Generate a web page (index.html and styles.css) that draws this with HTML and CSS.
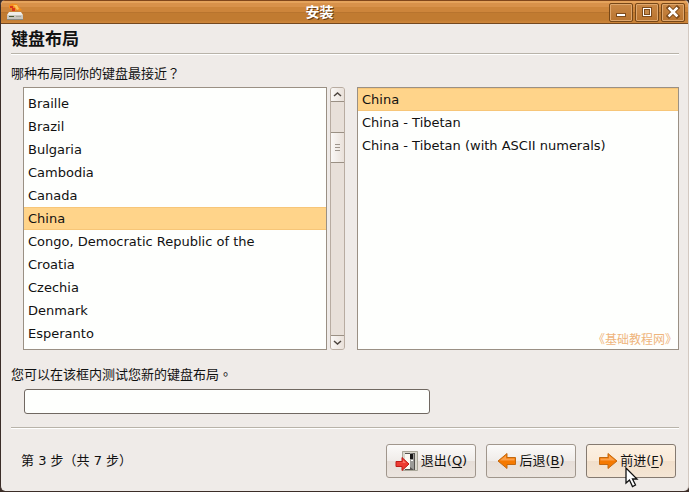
FILE: index.html
```html
<!DOCTYPE html>
<html lang="zh-CN">
<head>
<meta charset="utf-8">
<title>安装</title>
<link rel="stylesheet" href="styles.css">
</head>
<body>
<div class="window">
  <header class="titlebar">
    <svg class="app-icon" width="18" height="18" viewBox="0 0 18 18" aria-hidden="true">
      <path d="M3 2l3-1.500 5 .5 2 3 3 3-3 1-2-2-2 2-3-1-3-2z" fill="#f28c1c"/>
      <path d="M4 3h3v2H4zM6 5h3v3H6z" fill="#d8361a"/>
      <path d="M7 2h4l2 4-2 1-2-3z" fill="#fbc35f"/>
      <path d="M3 9h12l2 3H1z" fill="#efeeea"/>
      <path d="M1 12h16v4H1z" fill="#c9c7c0"/>
      <path d="M1 16h16v1H1z" fill="#8b8a82"/>
      <path d="M3 13h5v1H3z" fill="#4b5a32"/>
      <path d="M10 13h5v1h-5z" fill="#a9a79e"/>
    </svg>
    <h1 class="title">安装</h1>
    <div class="controls">
      <button class="control" type="button" aria-label="最小化"><svg width="14" height="14" viewBox="0 0 14 14"><path d="M2 8h10v4H2z" fill="#7d4b1c"/><path d="M3 9h8v2H3z" fill="#fff"/></svg></button>
      <button class="control" type="button" aria-label="最大化"><svg width="14" height="14" viewBox="0 0 14 14"><path d="M2 2h10v10H2z" fill="#7d4b1c"/><path d="M3 3h8v8H3z" fill="#fff"/><path d="M4 4h6v6H4z" fill="#7d4b1c"/><path d="M5 5h4v4H5z" fill="#c58a4c"/></svg></button>
      <button class="control" type="button" aria-label="关闭"><svg width="14" height="14" viewBox="0 0 14 14"><path d="M3 3l8 8M11 3l-8 8" stroke="#7d4b1c" stroke-width="4.500" stroke-linecap="square"/><path d="M3.500 3.500l7 7M10.500 3.500l-7 7" stroke="#fff" stroke-width="2.500" stroke-linecap="square"/></svg></button>
    </div>
  </header>

  <main class="content">
    <h2 class="heading">键盘布局</h2>
    <label class="label" for="layout">哪种布局同你的键盘最接近<span class="mark" lang="zh-TW">？</span></label>
    <div class="panes">
      <div class="scroller">
        <select class="list list-scrolled" id="layout" size="11">
          <option>Braille</option>
          <option>Brazil</option>
          <option>Bulgaria</option>
          <option>Cambodia</option>
          <option>Canada</option>
          <option selected>China</option>
          <option>Congo, Democratic Republic of the</option>
          <option>Croatia</option>
          <option>Czechia</option>
          <option>Denmark</option>
          <option>Esperanto</option>
        </select>
        <div class="scrollbar">
          <button class="step step-up" type="button" aria-label="向上"><svg width="9" height="7" viewBox="0 0 9 7"><path d="M1 5l3.500-3L8 5" fill="none" stroke="#4c453f" stroke-width="1.500"/></svg></button>
          <div class="space-before"></div>
          <div class="thumb"><svg width="5" height="7" viewBox="0 0 5 7"><path d="M0 0h5v1H0zM0 3h5v1H0zM0 6h5v1H0z" fill="#9d958c"/></svg></div>
          <div class="space-after"></div>
          <button class="step step-down" type="button" aria-label="向下"><svg width="9" height="7" viewBox="0 0 9 7"><path d="M1 2l3.500 3L8 2" fill="none" stroke="#4c453f" stroke-width="1.500"/></svg></button>
        </div>
      </div>
      <div class="variants">
        <select class="list" size="11" aria-label="布局变体">
          <option selected>China</option>
          <option>China - Tibetan</option>
          <option>China - Tibetan (with ASCII numerals)</option>
        </select>
        <span class="watermark">《基础教程网》</span>
      </div>
    </div>
    <label class="label" for="test">您可以在该框内测试您新的键盘布局<span class="mark" lang="zh-TW">。</span></label>
    <input class="test" id="test" type="text">
  </main>

  <footer class="footer">
    <span class="progress">第 3 步（共 7 步）</span>
    <button class="action" type="button">
      <svg width="24" height="24" viewBox="0 0 24 24" aria-hidden="true">
        <path d="M7 2h16v20H7z" fill="#d9d7cd"/>
        <path d="M7.500 2.500h15v19h-15z" fill="none" stroke="#aaa79a"/>
        <path d="M10 4h10v17H10z" fill="#55534f"/>
        <path d="M10 5h5v15h-5z" fill="#faf9f3"/>
        <path d="M15 4l4 1v16l-4-3z" fill="#9b9b98"/>
        <path d="M15 5h3v5h-3z" fill="#181818"/>
        <path d="M16 11h2v1h-2z" fill="#fff"/>
        <path d="M1 12.500h6v-4l7 6.500-7 6.500v-4H1z" fill="#ed3b32" stroke="#bd1c18"/>
        <path d="M2 13.500h6v-2.500l3 3z" fill="#ff7b6d"/>
      </svg>
      <span>退出(<u>Q</u>)</span>
    </button>
    <button class="action" type="button">
      <svg width="20" height="20" viewBox="0 0 20 20" aria-hidden="true">
        <path d="M1 10l9-7.500v4h8.500v7H10v4z" fill="#f57900" stroke="#c3680f" stroke-linejoin="round"/>
        <path d="M3 9.500L9 4.500v3h8.500v2z" fill="#fba04a"/>
      </svg>
      <span>后退(<u>B</u>)</span>
    </button>
    <button class="action action-hover" type="button">
      <svg width="20" height="20" viewBox="0 0 20 20" aria-hidden="true">
        <path d="M19 10l-9-7.500v4H1.500v7H10v4z" fill="#f57900" stroke="#c3680f" stroke-linejoin="round"/>
        <path d="M17 9.500L11 4.500v3H2.500v2z" fill="#fba04a"/>
      </svg>
      <span>前进(<u>F</u>)</span>
      <svg class="pointer" width="14" height="21" viewBox="0 0 14 21" aria-hidden="true"><path d="M1 1v15l3.500-3 3 6.500 3-1.500-3-6H12z" fill="#fff" stroke="#111" stroke-width="1.300"/></svg>
    </button>
  </footer>
</div>
</body>
</html>
```
FILE: styles.css
```css
* {
  box-sizing: border-box;
}

body {
  margin: 0;
  background: #3b2d28;
  color: #111;
  font: 13px/20px "DejaVu Sans", "Noto Sans CJK SC", sans-serif;
}

button,
input,
select {
  margin: 0;
  color: inherit;
  font: inherit;
}

.window {
  display: flex;
  flex-direction: column;
  min-height: calc(100vh - 1px);
  border: solid #3b2d28;
  border-width: 0 0 0 1px;
  border-right: 1px solid #d3c9c1;
  border-radius: 5px;
  background: #efebe8;
  overflow: hidden;
}

.titlebar {
  display: grid;
  grid-template-columns: auto 1fr auto;
  align-items: center;
  height: 24px;
  padding: 0 3px 0 5px;
  border-top: 1px solid #80461b;
  border-bottom: 1px solid #74481f;
  background: linear-gradient(#e5a35c 0 2px, #d8914a 2px 6px, #cd853b 6px 11px, #b8742e 11px 12px, #c17b31 12px 19px, #cf873b);
}

.app-icon {
  display: block;
}

.title {
  margin: 0;
  padding-left: 6px;
  color: #fff;
  font-size: 14px;
  line-height: 20px;
  text-align: center;
  text-shadow: 1px 1px #633812;
}

.controls {
  display: flex;
  justify-content: flex-end;
  gap: 2px;
}

.control {
  display: grid;
  place-items: center;
  width: 24px;
  height: 19px;
  padding: 0;
  border: 1px solid #774717;
  border-radius: 2px;
  background: linear-gradient(#c98745, #b9742f);
  box-shadow: inset 0 0 0 1px #dfa76d;
}

.content {
  display: flex;
  flex: 1;
  flex-direction: column;
  padding: 0 9px 0 10px;
}

.heading {
  margin: 0 0 10px;
  padding: 3px 0 2px;
  border-bottom: 1px solid #b8b3a9;
  box-shadow: 0 1px #fff;
  font-size: 17px;
  line-height: 24px;
}

.label {
  align-self: flex-start;
}

.mark {
  font-family: "Noto Sans CJK TC", sans-serif;
  line-height: 1;
}

.panes {
  display: grid;
  flex: 1;
  grid-template-columns: 1fr 1fr;
  gap: 12px;
  margin: 3px 0 15px 12px;
}

.scroller {
  display: flex;
  gap: 3px;
}

.list {
  display: block;
  flex: 1;
  width: 100%;
  height: 100%;
  min-height: 258px;
  padding: 0;
  border: 1px solid #9a9084;
  border-radius: 0;
  outline: 0;
  background: #fefffd;
  appearance: none;
  overflow: hidden;
}

.list-scrolled {
  padding-top: 4px;
}

.list option {
  height: 23px;
  min-height: 23px;
  padding: 4px 4px 0;
}

.list option:checked {
  background: #ffd48a linear-gradient(#ffd48a, #ffd48a);
  box-shadow: inset 0 1px #f7c678, inset 0 -1px #f7c678;
  color: #111;
}

.scrollbar {
  display: flex;
  flex-direction: column;
  width: 15px;
  border: 1px solid #b8aca1;
  border-radius: 3px;
  background: #e8e0d9;
}

.step,
.thumb {
  display: grid;
  place-items: center;
  padding: 0;
  border: 0 solid #9a9084;
  background: linear-gradient(90deg, #faf8f6, #e9e1da);
}

.step {
  height: 14px;
}

.step-up {
  border-bottom-width: 1px;
  border-radius: 2px 2px 0 0;
}

.step-down {
  border-top-width: 1px;
  border-radius: 0 0 2px 2px;
}

.thumb {
  height: 31px;
  border-width: 1px 0;
}

.space-before {
  flex: 30;
}

.space-after {
  flex: 172;
}

.variants {
  position: relative;
}

.watermark {
  position: absolute;
  right: 2px;
  bottom: 0;
  color: #efb57c;
  font-size: 12px;
}

.test {
  width: 406px;
  max-width: 100%;
  height: 25px;
  margin: 4px 0 13px 13px;
  padding: 0 4px;
  border: 1px solid #706861;
  border-radius: 3px;
  background: #fefffd;
}

.footer {
  display: flex;
  align-items: center;
  gap: 10px;
  margin: 0 9px 0 10px;
  padding: 16px 3px 13px 10px;
  border-top: 1px solid #b8b3a9;
  box-shadow: inset 0 1px #fff;
}

.progress {
  flex: 1;
}

.action {
  position: relative;
  display: flex;
  align-items: center;
  justify-content: center;
  gap: 2px;
  width: 90px;
  height: 34px;
  padding: 0;
  border: 1px solid #a0968c;
  border-radius: 3px;
  background: linear-gradient(#fbfaf9, #f0ece9 50%, #e6ded8 50%, #ece5df);
  white-space: nowrap;
}

.action-hover {
  border-color: #857a70;
  background: linear-gradient(#fcf1e3, #faead8 50%, #f1dfcb 50%, #f5e6d5);
}

.action u {
  text-underline-offset: 2px;
}

.pointer {
  position: absolute;
  top: 22px;
  left: 38px;
}
```
